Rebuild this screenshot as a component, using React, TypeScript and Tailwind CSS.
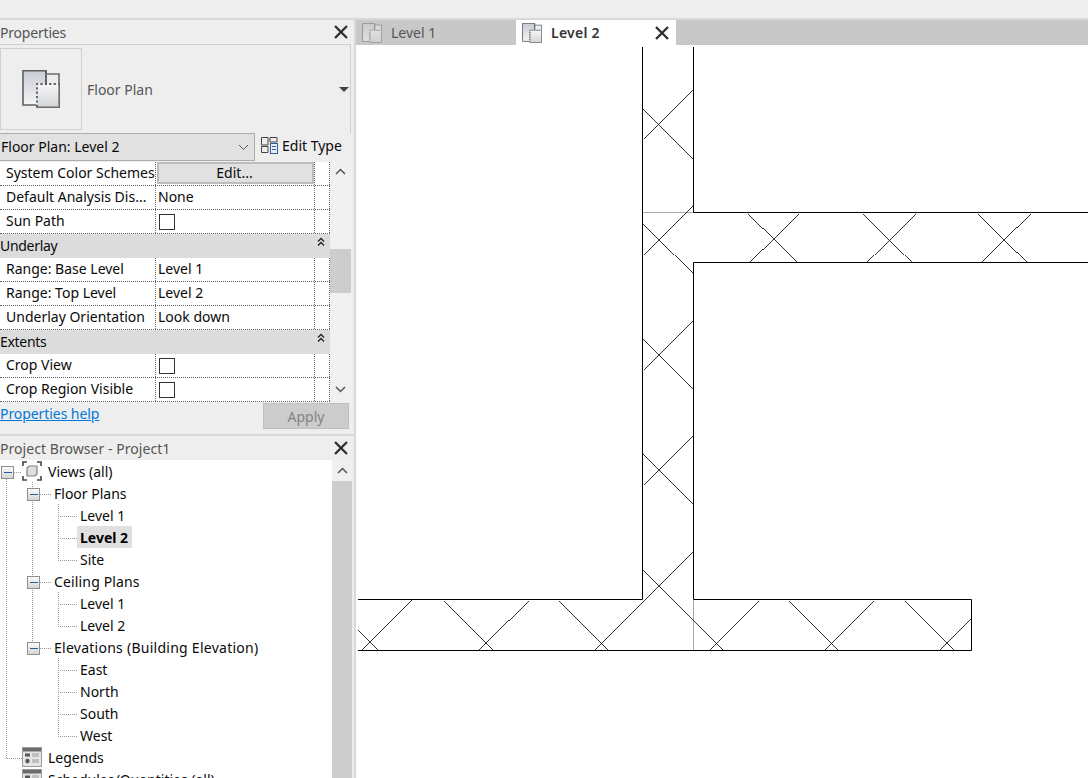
const font = { fontFamily: '"Noto Sans", "Open Sans", sans-serif' }

// wall outline of the plan, solid strokes
const walls = [
  "M642.5 47V599.5H358",
  "M358 650.5H971.5V599.5H693.5V262.5H1088",
  "M693.5 47V212.5H1088",
]

// hatch lines [x1, y1, x2, y2], all at 45 degrees so they stay one pixel wide
const hatch = [
  [693.5, 88.5, 643.5, 138.5],
  [643.5, 108.5, 693.5, 158.5],
  [693.5, 204.5, 643.5, 254.5],
  [643.5, 223.5, 693.5, 273.5],
  [693.5, 319.5, 643.5, 369.5],
  [643.5, 338.5, 693.5, 388.5],
  [693.5, 434.5, 643.5, 484.5],
  [643.5, 453.5, 693.5, 503.5],
  [693.5, 550.5, 593.5, 650.5],
  [643.5, 569.5, 724.5, 650.5],
  [358.5, 629.5, 379.5, 650.5],
  [411.5, 599.5, 360.5, 650.5],
  [444.5, 600.5, 494.5, 650.5],
  [528.5, 600.5, 478.5, 650.5],
  [559.5, 600.5, 609.5, 650.5],
  [758.5, 600.5, 708.5, 650.5],
  [789.5, 600.5, 839.5, 650.5],
  [873.5, 600.5, 823.5, 650.5],
  [905.5, 600.5, 955.5, 650.5],
  [971.5, 617.5, 938.5, 650.5],
  [748.5, 213.5, 797.5, 262.5],
  [798.5, 213.5, 749.5, 262.5],
  [863.5, 213.5, 912.5, 262.5],
  [915.5, 213.5, 866.5, 262.5],
  [978.5, 213.5, 1027.5, 262.5],
  [1030.5, 213.5, 981.5, 262.5],
]

function CloseIcon({ className }: { className?: string }) {
  return (
    <svg width="14" height="14" viewBox="0 0 14 14" className={className}>
      <path d="M1 1L13 13M13 1L1 13" stroke="#2e2e2e" strokeWidth="2.3" fill="none" />
    </svg>
  )
}

function PlanIcon({ size, muted }: { size: number; muted?: boolean }) {
  return (
    <svg width={size} height={size} viewBox="0 0 38 38" style={{ opacity: muted ? 0.55 : 1 }}>
      <defs>
        <linearGradient id="plan-a" x1="0" y1="0" x2="0" y2="1">
          <stop offset="0" stopColor="#c9ccd3" />
          <stop offset="1" stopColor="#f4f5f6" />
        </linearGradient>
        <linearGradient id="plan-b" x1="0" y1="0" x2="0" y2="1">
          <stop offset="0" stopColor="#f7f7f7" />
          <stop offset="1" stopColor="#d3d5d8" />
        </linearGradient>
      </defs>
      <path d="M24 4H37V14H24Z" fill="#eceded" stroke="#6a6d70" strokeWidth="1.6" />
      <path d="M1 0.8H24V14H15V35H1Z" fill="url(#plan-a)" stroke="#5c5f63" strokeWidth="1.6" />
      <path d="M15 14H37.2V37.2H15Z" fill="url(#plan-b)" stroke="#6a6d70" strokeWidth="1.6" />
      <path d="M15 37V14H37" stroke="#f5f5f5" strokeWidth="1.8" fill="none" />
      <path d="M15 37V14H37" stroke="#55585c" strokeWidth="1.8" strokeDasharray="2.2 2.2" fill="none" />
      <path d="M24 1V14" stroke="#55585c" strokeWidth="1.6" strokeDasharray="2.2 2.2" fill="none" />
    </svg>
  )
}

function Checkbox() {
  return <span className="block w-[16px] h-[16px] border border-[#333] bg-white" />
}

function PropRow({ label, value, children }: { label: string; value?: string; children?: React.ReactNode }) {
  return (
    <div className="flex h-[24px] border-b border-dotted border-[#666] bg-white">
      <div className="w-[156px] shrink-0 pl-[6px] leading-[22px] whitespace-nowrap overflow-hidden border-r border-dotted border-[#666]">
        {label}
      </div>
      <div className="w-[159px] shrink-0 pl-[2px] leading-[20px] pb-[2px] border-r border-dotted border-[#666] flex items-center">
        {value}
        {children}
      </div>
      <div className="flex-1 border-r border-dotted border-[#666]" />
    </div>
  )
}

function GroupRow({ label }: { label: string }) {
  return (
    <div className="flex justify-between h-[24px] bg-[#dcdcdc] leading-[23px] pr-[5px]">
      <span className="tracking-[-0.3px]">{label}</span>
      <svg width="8" height="10" viewBox="0 0 8 10" className="mt-[3px]">
        <path d="M1 4.5L4 1.5L7 4.5M1 8.5L4 5.5L7 8.5" stroke="#222" strokeWidth="1.3" fill="none" />
      </svg>
    </div>
  )
}

function ScrollArrow({ down }: { down?: boolean }) {
  return (
    <svg width="11" height="7" viewBox="0 0 11 7">
      <path d={down ? "M1 1L5.5 5.5L10 1" : "M1 6L5.5 1.5L10 6"} stroke="#555" strokeWidth="1.5" fill="none" />
    </svg>
  )
}

function ExpandBox() {
  return (
    <span className="flex items-center justify-center w-[13px] h-[13px] border-[1.5px] border-[#8f8f8f] bg-gradient-to-b from-[#fbfbfb] to-[#d4d4d4]">
      <span className="block w-[8px] h-[1.5px] bg-[#2f56a6]" />
    </span>
  )
}

function ViewsIcon() {
  return (
    <svg width="20" height="20" viewBox="0 0 20 20">
      <path d="M1 5V1H5M15 1H19V5M19 15V19H15M5 19H1V15" stroke="#444" strokeWidth="1.6" fill="none" />
      <path d="M7 5H15V13L13 15H5V7Z" fill="#dcdee0" stroke="#808080" strokeWidth="1.2" />
    </svg>
  )
}

function LegendIcon() {
  return (
    <svg width="20" height="20" viewBox="0 0 20 20">
      <rect x="0.5" y="0.5" width="19" height="19" fill="#e4e5e6" stroke="#9a9a9a" />
      <rect x="1" y="1" width="18" height="3.5" fill="#6a6d70" />
      <rect x="3" y="6.5" width="5" height="3" fill="#555" />
      <path d="M10 7H17M10 9H17M10 13H17M10 15H17" stroke="#9b9b9b" strokeWidth="1" />
      <circle cx="5.5" cy="14" r="2.2" fill="#555" />
    </svg>
  )
}

const tree = [
  { label: "Views (all)", box: 1, pad: 48, icon: "views" },
  { label: "Floor Plans", box: 27, pad: 54 },
  { label: "Level 1", pad: 80 },
  { label: "Level 2", pad: 80, active: true },
  { label: "Site", pad: 80 },
  { label: "Ceiling Plans", box: 27, pad: 54, wide: "tracking-[0.15px]" },
  { label: "Level 1", pad: 80 },
  { label: "Level 2", pad: 80 },
  { label: "Elevations (Building Elevation)", box: 27, pad: 54, wide: "tracking-[0.26px]" },
  { label: "East", pad: 80 },
  { label: "North", pad: 80 },
  { label: "South", pad: 80 },
  { label: "West", pad: 80 },
  { label: "Legends", pad: 48, icon: "legend" },
  { label: "Schedules/Quantities (all)", pad: 48, icon: "legend" },
]

export default function App() {
  return (
    <div className="w-[1088px] h-[778px] overflow-hidden bg-[#eeeeee] text-[14px] text-[#0a0a0a]" style={font}>
      <div className="h-[18px] bg-[#eeeeee]" />
      <div className="h-[2px] bg-[#d9d9d9]" />
      <div className="flex h-[758px]">
        {/* Left dock */}
        <div className="w-[354px] shrink-0 flex flex-col bg-[#eeeeee]">
          {/* Properties */}
          <div className="flex items-center justify-between h-[24px] pr-[6px] text-[#555]">
            <span className="tracking-[-0.2px]">Properties</span>
            <CloseIcon />
          </div>
          <div className="flex items-center h-[89px] w-[351px] border-t border-r border-[#cfcfcf]">
            <div className="flex items-center justify-center w-[82px] h-[82px] border border-[#cfcfcf]">
              <PlanIcon size={38} />
            </div>
            <span className="ml-[5px] text-[#555]">Floor Plan</span>
            <span className="ml-auto mr-[1px] w-0 h-0 border-l-[5px] border-r-[5px] border-t-[5px] border-l-transparent border-r-transparent border-t-[#444]" />
          </div>
          <div className="flex items-center h-[28px]">
            <div className="flex items-center justify-between w-[255px] h-[28px] bg-[#e1e1e1] border-y border-r border-[#adadad] pl-[1px] pr-[4px] pb-[2px]">
              <span>Floor Plan: Level 2</span>
              <svg width="11" height="7" viewBox="0 0 11 7" className="mr-[1px] mt-[2px]">
                <path d="M1 1L5.5 5.5L10 1" stroke="#555" strokeWidth="1" fill="none" />
              </svg>
            </div>
            <svg width="17" height="17" viewBox="0 0 17 17" className="ml-[6px] -mt-[4px]">
              <path d="M0.5 0.5H7V8H0.5ZM9 0.5H16V5H9ZM0.5 9.5H7V15.5H0.5Z" fill="none" stroke="#444" strokeWidth="1" />
              <rect x="9.5" y="6.5" width="7" height="10" fill="#e8edf5" stroke="#2f5f9e" />
              <path d="M11 9.5H15M11 12.5H15" stroke="#2f5f9e" strokeWidth="1" />
            </svg>
            <span className="ml-[4px] -mt-[3px]">Edit Type</span>
          </div>
          <div className="flex h-[240px] w-[351px] mt-[1px]">
            <div className="w-[330px] shrink-0 overflow-hidden">
              <PropRow label="System Color Schemes">
                <span className="-ml-[1px] block w-[157px] h-[22px] bg-[#e1e1e1] border-2 border-[#bdbdbd] text-center leading-[18px] pr-[2px]">
                  Edit...
                </span>
              </PropRow>
              <PropRow label="Default Analysis Dis..." value="None" />
              <PropRow label="Sun Path">
                <span className="ml-[1px] mt-[2px]">
                  <Checkbox />
                </span>
              </PropRow>
              <GroupRow label="Underlay" />
              <PropRow label="Range: Base Level" value="Level 1" />
              <PropRow label="Range: Top Level" value="Level 2" />
              <PropRow label="Underlay Orientation" value="Look down" />
              <GroupRow label="Extents" />
              <PropRow label="Crop View">
                <span className="ml-[1px] mt-[2px]">
                  <Checkbox />
                </span>
              </PropRow>
              <PropRow label="Crop Region Visible">
                <span className="ml-[1px] mt-[2px]">
                  <Checkbox />
                </span>
              </PropRow>
            </div>
            <div className="flex-1 flex flex-col items-center bg-[#f0f0f0]">
              <div className="h-[20px] pt-[6px] flex">
                <ScrollArrow />
              </div>
              <div className="w-full h-[44px] mt-[67px] bg-[#cdcdcd]" />
              <div className="mt-auto h-[20px] pt-[4px] flex">
                <ScrollArrow down />
              </div>
            </div>
          </div>
          <div className="flex justify-between items-start h-[32px] w-[349px] pt-[1px]">
            <a className="text-[#0078d7] underline leading-[22px] tracking-[-0.07px]">Properties help</a>
            <span className="block w-[86px] h-[26px] bg-[#cccccc] border border-[#bfbfbf] text-[#838383] text-center leading-[25px]">
              Apply
            </span>
          </div>
          <div className="h-[2px] bg-[#d9d9d9]" />

          {/* Project browser */}
          <div className="flex items-center justify-between h-[24px] pr-[6px] text-[#555]">
            <span className="tracking-[0.05px]">Project Browser - Project1</span>
            <CloseIcon />
          </div>
          <div className="flex flex-1 overflow-hidden">
            <div className="relative w-[332px] shrink-0 bg-white overflow-hidden">
              {/* dotted tree guides */}
              <svg className="absolute left-0 top-0" width="120" height="318" fill="none" stroke="#999" strokeDasharray="1 1">
                <path d="M6.5 19V298.5H22M14 12.5H22M32.5 22V188M40 34.5H52M40 122.5H52M40 188.5H52" />
                <path d="M58.5 44V100.5H77M58 56.5H77M58 78.5H77" />
                <path d="M58.5 132V166.5H77M58 144.5H77" />
                <path d="M58.5 198V276.5H77M58 210.5H77M58 232.5H77M58 254.5H77" />
              </svg>
              {tree.map((row, i) => (
                <div key={i} className="relative h-[22px] leading-[23px] whitespace-nowrap" style={{ paddingLeft: row.pad }}>
                  {row.box !== undefined && (
                    <span className="absolute top-[6px]" style={{ left: row.box }}>
                      <ExpandBox />
                    </span>
                  )}
                  {row.icon === "views" && (
                    <span className="absolute left-[22px] top-[1px]">
                      <ViewsIcon />
                    </span>
                  )}
                  {row.icon === "legend" && (
                    <span className="absolute left-[22px] top-[1px]">
                      <LegendIcon />
                    </span>
                  )}
                  {row.active ? (
                    <span className="absolute left-[77px] top-0 h-[22px] w-[55px] pl-[3px] bg-[#e0e0e0] font-bold text-black">
                      {row.label}
                    </span>
                  ) : (
                    <span className={row.wide}>{row.label}</span>
                  )}
                </div>
              ))}
            </div>
            <div className="w-[20px] flex flex-col bg-[#f0f0f0]">
              <div className="h-[21px] flex justify-center pt-[7px]">
                <ScrollArrow />
              </div>
              <div className="flex-1 bg-[#cdcdcd]" />
            </div>
            <div className="flex-1 bg-[#eeeeee]" />
          </div>
        </div>

        {/* View area */}
        <div className="flex-1 flex flex-col border-l-2 border-[#d9d9d9]">
          <div className="flex h-[25px] bg-[#c8c8c8] text-[14px]">
            <div className="flex items-center w-[160px] pl-[6px] text-[#555]">
              <PlanIcon size={20} muted />
              <span className="ml-[9px]">Level 1</span>
            </div>
            <div className="flex items-center w-[160px] pl-[6px] bg-white text-[#333] font-semibold">
              <PlanIcon size={20} />
              <span className="ml-[9px] tracking-[0.25px]">Level 2</span>
              <CloseIcon className="ml-auto mr-[7px]" />
            </div>
          </div>
          <div className="relative flex-1 bg-white">
            <svg className="absolute left-[-356px] top-[-45px]" width="1088" height="778" fill="none">
              <path d="M642.5 212.5H693.5M693.5 600V650" stroke="#aaaaaa" />
              {walls.map((d) => (
                <path key={d} d={d} stroke="#000" strokeWidth="1" />
              ))}
              {hatch.map(([x1, y1, x2, y2], i) => (
                <line key={i} x1={x1} y1={y1} x2={x2} y2={y2} stroke="#000" strokeWidth="0.8" shapeRendering="crispEdges" />
              ))}
            </svg>
          </div>
        </div>
      </div>
    </div>
  )
}
